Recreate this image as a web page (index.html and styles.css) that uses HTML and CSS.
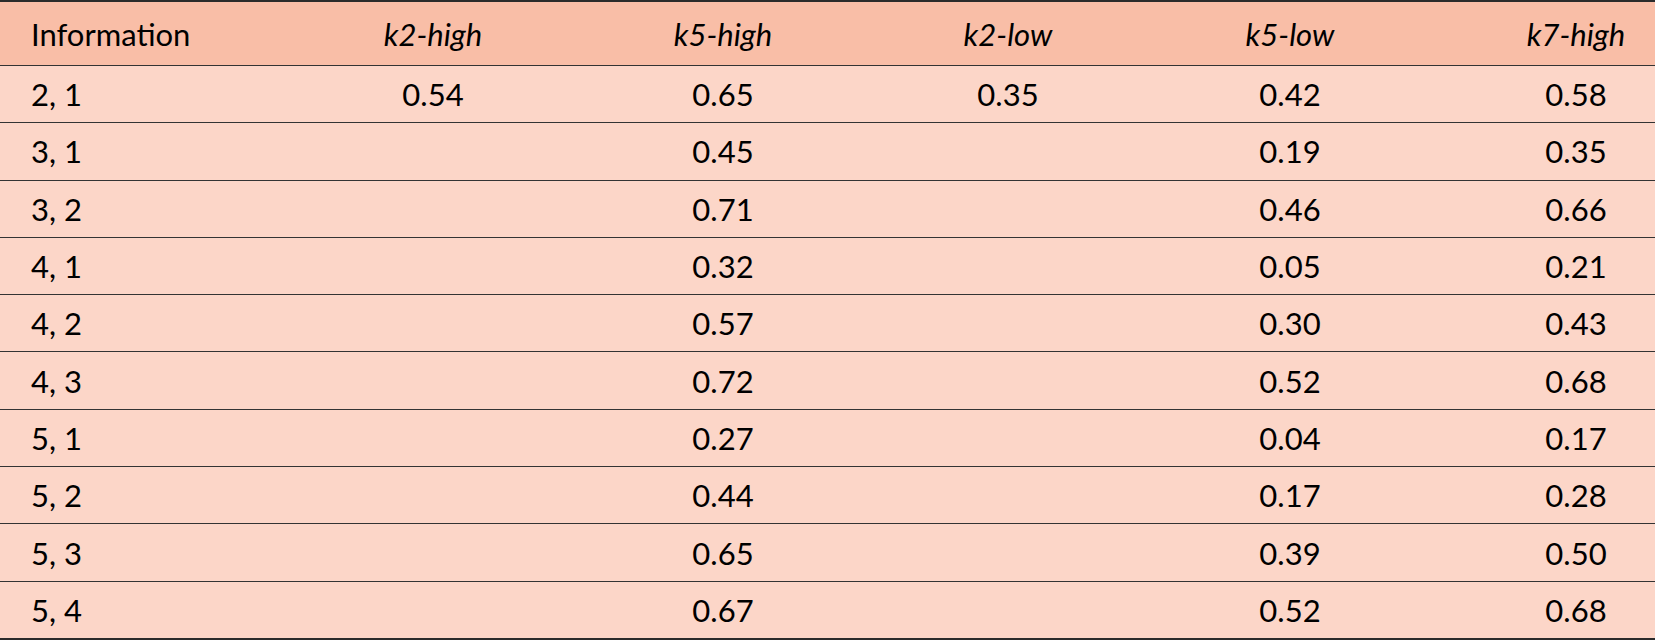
FILE: index.html
```html
<!DOCTYPE html>
<html>
<head>
<meta charset="utf-8">
<link rel="stylesheet" href="styles.css">
</head>
<body>
<table class="data">
  <colgroup>
    <col class="c1"><col class="c2"><col class="c3"><col class="c4"><col class="c5"><col class="c6">
  </colgroup>
  <thead>
    <tr>
      <th class="first">Information</th>
      <th><i>k2-high</i></th>
      <th><i>k5-high</i></th>
      <th><i>k2-low</i></th>
      <th><i>k5-low</i></th>
      <th><i>k7-high</i></th>
    </tr>
  </thead>
  <tbody>
    <tr><td class="first">2, 1</td><td>0.54</td><td>0.65</td><td>0.35</td><td>0.42</td><td>0.58</td></tr>
    <tr><td class="first">3, 1</td><td></td><td>0.45</td><td></td><td>0.19</td><td>0.35</td></tr>
    <tr><td class="first">3, 2</td><td></td><td>0.71</td><td></td><td>0.46</td><td>0.66</td></tr>
    <tr><td class="first">4, 1</td><td></td><td>0.32</td><td></td><td>0.05</td><td>0.21</td></tr>
    <tr><td class="first">4, 2</td><td></td><td>0.57</td><td></td><td>0.30</td><td>0.43</td></tr>
    <tr><td class="first">4, 3</td><td></td><td>0.72</td><td></td><td>0.52</td><td>0.68</td></tr>
    <tr><td class="first">5, 1</td><td></td><td>0.27</td><td></td><td>0.04</td><td>0.17</td></tr>
    <tr><td class="first">5, 2</td><td></td><td>0.44</td><td></td><td>0.17</td><td>0.28</td></tr>
    <tr><td class="first">5, 3</td><td></td><td>0.65</td><td></td><td>0.39</td><td>0.50</td></tr>
    <tr><td class="first">5, 4</td><td></td><td>0.67</td><td></td><td>0.52</td><td>0.68</td></tr>
  </tbody>
</table>
</body>
</html>
```
FILE: styles.css
```css
html, body {
  margin: 0;
  padding: 0;
  background: #ffffff;
}
.data {
  width: 1655px;
  border-collapse: collapse;
  table-layout: fixed;
  font-family: "Lato", "Liberation Sans", sans-serif;
  font-size: 31px;
  color: #000;
}
.c1 { width: 353px; }
.c2 { width: 160px; }
.c3 { width: 420px; }
.c4 { width: 150px; }
.c5 { width: 414px; }
.c6 { width: 158px; }
.data thead tr {
  background: #f9bea7;
  border-top: 2px solid #2b2b2b;
  border-bottom: 1px solid #333;
}
.data th {
  font-weight: normal;
  height: 63px;
  padding: 0;
  text-align: center;
  vertical-align: middle;
  white-space: nowrap;
}
.data tbody tr {
  background: #fcd6c8;
  border-bottom: 1px solid #333;
}
.data tbody tr:last-child {
  border-bottom: 2px solid #2b2b2b;
}
.data td {
  height: 56.3px;
  padding: 0;
  text-align: center;
  vertical-align: middle;
  white-space: nowrap;
}
.data .first {
  text-align: left;
  padding-left: 31px;
}
```
